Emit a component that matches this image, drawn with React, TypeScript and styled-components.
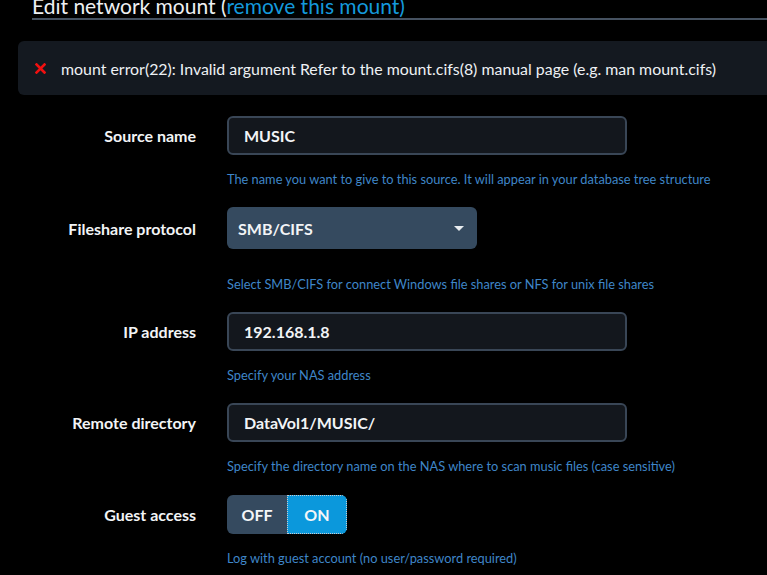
import React, { useState } from 'react';
import styled, { createGlobalStyle } from 'styled-components';

const GlobalStyle = createGlobalStyle`
  html, body {
    margin: 0;
    padding: 0;
    background: #000;
    overflow: hidden;
  }
  body {
    font-family: Lato, "Open Sans", sans-serif;
    color: #e6e9ee;
  }
`;

const Page = styled.div`
  padding: 0 0 0 18px;
  width: 767px;
  height: 575px;
  box-sizing: border-box;
`;

const Title = styled.h2`
  margin: -7px 0 0 14px;
  padding: 0;
  font-size: 21px;
  font-weight: 400;
  line-height: 25px;
  color: #eef0f3;
  border-bottom: 2px solid #465261;
  white-space: nowrap;
`;

const TitleLink = styled.a`
  color: #1499dc;
  text-decoration: none;
`;

const ErrorBox = styled.div`
  display: flex;
  align-items: center;
  gap: 14px;
  margin-top: 21px;
  height: 54px;
  padding-left: 15px;
  background: #141920;
  border-radius: 6px 0 0 6px;
  font-size: 15.9px;
  color: #eef1f4;
  white-space: nowrap;
`;

const ErrorIcon = styled.span`
  display: inline-flex;
  width: 14px;
  justify-content: center;
`;

const Form = styled.div`
  margin-top: 21px;
  display: flex;
  flex-direction: column;
  gap: 21px;
`;

const Row = styled.div<{ $space?: number }>`
  display: grid;
  grid-template-columns: 178px 1fr;
  column-gap: 31px;
  align-items: center;
  margin-top: ${p => p.$space ?? 0}px;
`;

const Label = styled.label`
  text-align: right;
  font-size: 16px;
  font-weight: 700;
  color: #f2f4f6;
`;

const Help = styled.div<{ $gap?: number }>`
  grid-column: 2;
  margin-top: ${p => p.$gap ?? 17}px;
  font-size: 12.8px;
  line-height: 14px;
  color: #3f86c8;
  white-space: nowrap;
`;

const TextInput = styled.input`
  box-sizing: border-box;
  width: 400px;
  height: 39px;
  padding: 0 15px;
  background: #13171d;
  border: 2px solid #394656;
  border-radius: 6px;
  font-family: Lato, sans-serif;
  font-size: 16px;
  font-weight: 700;
  color: #f2f4f6;
  outline: none;
`;

const Select = styled.div`
  box-sizing: border-box;
  width: 250px;
  height: 42px;
  padding: 0 12px 0 11px;
  display: flex;
  align-items: center;
  justify-content: space-between;
  background: #354a5f;
  border-radius: 6px;
  font-size: 16px;
  font-weight: 700;
  color: #f2f4f6;
`;

const Caret = styled.span`
  width: 0;
  height: 0;
  border-left: 5px solid transparent;
  border-right: 5px solid transparent;
  border-top: 5px solid #e8ecf0;
  margin-right: 1px;
`;

const Toggle = styled.div`
  display: flex;
  width: 120px;
  height: 39px;
  border-radius: 6px;
  overflow: hidden;
`;

const ToggleButton = styled.button<{ $active: boolean }>`
  flex: 1;
  border: none;
  margin: 0;
  padding: 0;
  background: ${p => (p.$active ? '#0b98dc' : '#354a5f')};
  color: #f4f6f8;
  font-family: Lato, sans-serif;
  font-size: 16px;
  font-weight: 700;
  cursor: pointer;
  outline: ${p => (p.$active ? '1px dotted #c8ccd0' : 'none')};
  outline-offset: -1px;
`;

const App: React.FC = () => {
  const [guest, setGuest] = useState(true);

  return (
    <>
      <GlobalStyle />
      <Page>
        <Title>
          Edit network mount (<TitleLink href="#">remove this mount</TitleLink>
          <TitleLink as="span">)</TitleLink>
        </Title>

        <ErrorBox>
          <ErrorIcon>
            <svg width="11" height="11" viewBox="0 0 11 11">
              <path d="M1.5 1.5 L9.5 9.5 M9.5 1.5 L1.5 9.5" stroke="#f01010" strokeWidth="2.6" strokeLinecap="square" />
            </svg>
          </ErrorIcon>
          mount error(22): Invalid argument Refer to the mount.cifs(8) manual page (e.g. man mount.cifs)
        </ErrorBox>

        <Form>
          <Row>
            <Label>Source name</Label>
            <TextInput defaultValue="MUSIC" />
            <Help>The name you want to give to this source. It will appear in your database tree structure</Help>
          </Row>

          <Row>
            <Label>Fileshare protocol</Label>
            <Select>
              SMB/CIFS
              <Caret />
            </Select>
            <Help $gap={28}>Select SMB/CIFS for connect Windows file shares or NFS for unix file shares</Help>
          </Row>

          <Row>
            <Label>IP address</Label>
            <TextInput defaultValue="192.168.1.8" />
            <Help>Specify your NAS address</Help>
          </Row>

          <Row>
            <Label>Remote directory</Label>
            <TextInput defaultValue="DataVol1/MUSIC/" />
            <Help>Specify the directory name on the NAS where to scan music files (case sensitive)</Help>
          </Row>

          <Row $space={1}>
            <Label>Guest access</Label>
            <Toggle>
              <ToggleButton $active={!guest} onClick={() => setGuest(false)}>OFF</ToggleButton>
              <ToggleButton $active={guest} onClick={() => setGuest(true)}>ON</ToggleButton>
            </Toggle>
            <Help>Log with guest account (no user/password required)</Help>
          </Row>
        </Form>
      </Page>
    </>
  );
};

export default App;
